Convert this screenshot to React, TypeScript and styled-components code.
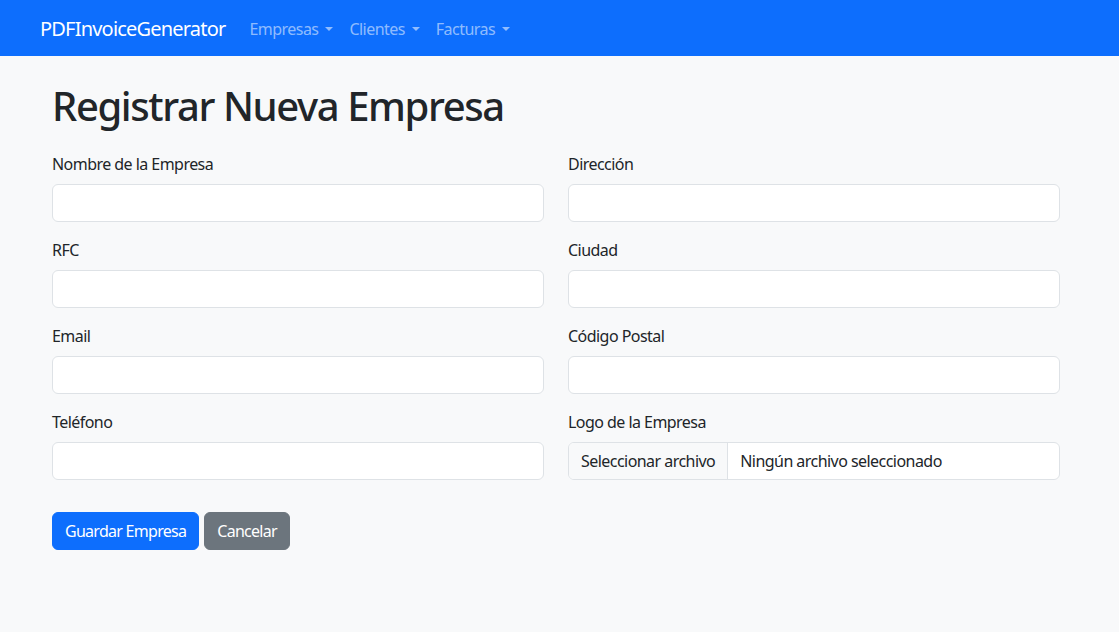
import React from "react";
import styled, { createGlobalStyle } from "styled-components";

const Global = createGlobalStyle`
  * { box-sizing: border-box; }
  body {
    margin: 0;
    background: #f8f9fa;
    color: #212529;
    font-family: "Noto Sans", "Open Sans", sans-serif;
    font-size: 16px;
    line-height: 1.5;
    letter-spacing: -0.034em;
  }
`;

const Navbar = styled.nav`
  height: 56px;
  background: #0d6efd;
  display: flex;
  align-items: center;
  padding: 2px 40px 0;
`;

const Brand = styled.a`
  color: #fff;
  font-size: 20px;
  margin-right: 16px;
  text-decoration: none;
  line-height: 30px;
  letter-spacing: -0.04em;
`;

const NavLink = styled.a`
  color: rgba(255, 255, 255, 0.55);
  padding: 8px;
  text-decoration: none;
  display: flex;
  align-items: center;
  &::after {
    content: "";
    display: inline-block;
    margin-left: 7px;
    border-top: 4.8px solid;
    border-left: 4.8px solid transparent;
    border-right: 4.8px solid transparent;
  }
`;

const Main = styled.main`
  padding: 24px 59px 0 52px;
`;

const Title = styled.h1`
  font-size: 40px;
  font-weight: 500;
  line-height: 1.2;
  margin: 2px 0 22px;
  letter-spacing: -0.035em;
`;

const Grid = styled.div`
  display: grid;
  grid-template-columns: 1fr 1fr;
  column-gap: 24px;
`;

const Field = styled.div`
  margin-bottom: 16px;
`;

const Label = styled.label`
  display: block;
  margin-bottom: 8px;
`;

const Input = styled.input`
  display: block;
  width: 100%;
  height: 38px;
  border: 1px solid #dee2e6;
  border-radius: 6px;
  background: #fff;
  padding: 6px 12px;
  font: inherit;
`;

const FileBox = styled.div`
  display: flex;
  height: 38px;
  border: 1px solid #dee2e6;
  border-radius: 6px;
  background: #fff;
  overflow: hidden;
  align-items: stretch;
`;

const FileButton = styled.span`
  background: #f8f9fa;
  border-right: 1px solid #dee2e6;
  padding: 6px 12px;
  display: flex;
  align-items: center;
`;

const FileName = styled.span`
  padding: 6px 12px;
  display: flex;
  align-items: center;
`;

const Actions = styled.div`
  display: flex;
  gap: 5px;
  margin-top: 16px;
`;

const Button = styled.button<{ $variant: "primary" | "secondary" }>`
  font: inherit;
  letter-spacing: -0.045em;
  color: #fff;
  height: 38px;
  padding: 6px 12px;
  border-radius: 6px;
  border: 1px solid ${(p) => (p.$variant === "primary" ? "#0d6efd" : "#6c757d")};
  background: ${(p) => (p.$variant === "primary" ? "#0d6efd" : "#6c757d")};
`;

const fieldsLeft = ["Nombre de la Empresa", "RFC", "Email", "Teléfono"];
const fieldsRight = ["Dirección", "Ciudad", "Código Postal"];

export default function App() {
  const rows = [0, 1, 2, 3];
  return (
    <>
      <Global />
      <Navbar>
        <Brand>PDFInvoiceGenerator</Brand>
        <NavLink>Empresas</NavLink>
        <NavLink>Clientes</NavLink>
        <NavLink>Facturas</NavLink>
      </Navbar>
      <Main>
        <Title>Registrar Nueva Empresa</Title>
        <Grid>
          {rows.map((i) => (
            <React.Fragment key={i}>
              <Field>
                <Label>{fieldsLeft[i]}</Label>
                <Input />
              </Field>
              <Field>
                <Label>{i < 3 ? fieldsRight[i] : "Logo de la Empresa"}</Label>
                {i < 3 ? (
                  <Input />
                ) : (
                  <FileBox>
                    <FileButton>Seleccionar archivo</FileButton>
                    <FileName>Ningún archivo seleccionado</FileName>
                  </FileBox>
                )}
              </Field>
            </React.Fragment>
          ))}
        </Grid>
        <Actions>
          <Button $variant="primary">Guardar Empresa</Button>
          <Button $variant="secondary">Cancelar</Button>
        </Actions>
      </Main>
    </>
  );
}
